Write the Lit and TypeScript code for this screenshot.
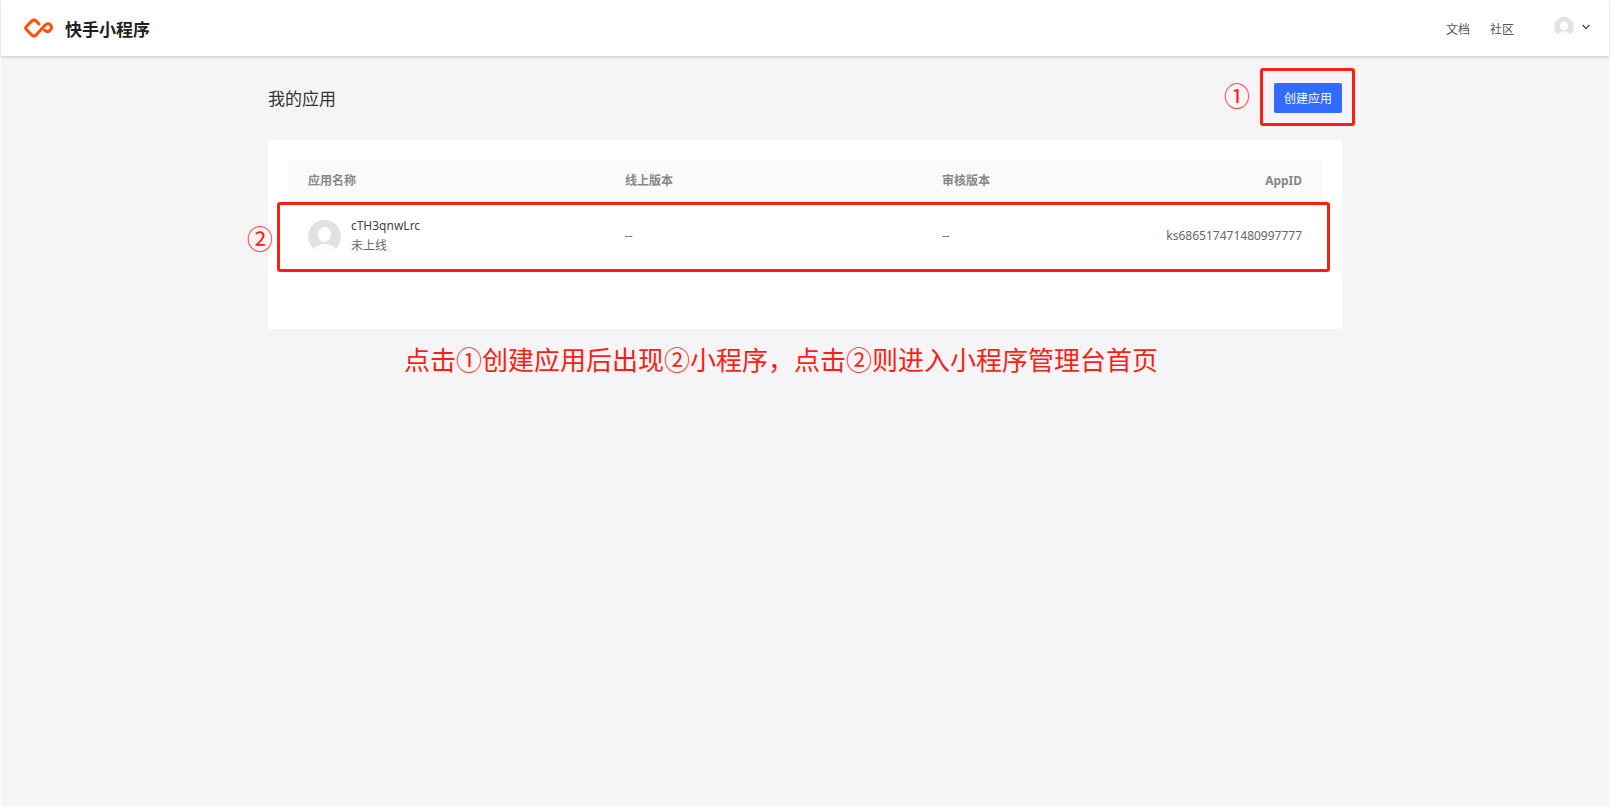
import { LitElement, html, css } from "lit";
import { customElement, property } from "lit/decorators.js";

interface MiniApp {
  name: string;
  status: string;
  online: string;
  review: string;
  appId: string;
}

@customElement("user-avatar")
class UserAvatar extends LitElement {
  static styles = css`
    :host { display: block; flex: none; }
    svg { display: block; width: 100%; height: 100%; }
  `;
  render() {
    return html`<svg viewBox="0 0 33 33" aria-hidden="true">
      <clipPath id="round"><circle cx="16.5" cy="16.5" r="16.5" /></clipPath>
      <g clip-path="url(#round)">
        <rect width="33" height="33" fill="#e2e2e2" />
        <ellipse cx="16.5" cy="14.5" rx="6.5" ry="7.5" fill="#fff" />
        <path d="M2.5 33C5 26.500 11 24 16.500 24S28 26.500 30.500 33z" fill="#fcfcfc" />
      </g>
    </svg>`;
  }
}

@customElement("top-bar")
class TopBar extends LitElement {
  static styles = css`
    :host {
      display: flex;
      align-items: center;
      justify-content: space-between;
      box-sizing: border-box;
      height: 56px;
      padding: 0 19px 0 23px;
      background: #fff;
      box-shadow: 0 1px 3px rgba(0, 0, 0, 0.2);
      position: relative;
    }
    .brand { display: flex; align-items: center; gap: 11px; color: #1f2023; text-decoration: none; font-size: 17px; font-weight: 700; line-height: 24px; }
    .brand span { padding-top: 4px; }
    .logo { display: block; width: 30px; height: 20px; }
    .nav { display: flex; align-items: center; gap: 20px; font-size: 12px; line-height: 18px; padding-top: 4px; }
    .nav a { color: #555; text-decoration: none; }
    .right { display: flex; align-items: center; gap: 40px; }
    .account { display: flex; align-items: center; gap: 8px; padding: 0 0 2px; border: 0; background: none; }
    .face { width: 20px; height: 20px; }
    .chevron { display: block; width: 8px; height: 6px; }
  `;
  render() {
    return html`
      <a class="brand" href="#">
        <svg class="logo" viewBox="0 0 30 20" fill="none" stroke="#ff5000" stroke-width="3" stroke-linecap="round" stroke-linejoin="round" aria-hidden="true">
          <path d="M15 6 12 2.900Q10 .9 8 2.900L2.600 8.200Q.8 10 2.600 11.800L8 17.100Q10 19.100 12 17.100L20.800 7.400Q23.600 4.500 26.300 6.700 28.700 9.200 26.500 11.800L25.600 12.700Q23.200 14.600 20.600 12.300" />
        </svg>
        <span>快手小程序</span>
      </a>
      <div class="right">
        <nav class="nav"><a href="#">文档</a><a href="#">社区</a></nav>
        <button class="account" type="button" aria-label="账号">
          <user-avatar class="face"></user-avatar>
          <svg class="chevron" viewBox="0 0 8 6" fill="none" stroke="#555" stroke-width="1.500" aria-hidden="true"><path d="M.5 1 4 4.500 7.500 1" /></svg>
        </button>
      </div>`;
  }
}

@customElement("app-table")
class AppTable extends LitElement {
  @property({ attribute: false }) apps: MiniApp[] = [];
  static styles = css`
    :host { display: block; position: relative; }
    table { width: 100%; border-collapse: collapse; font-size: 12px; line-height: 20px; }
    th, td { box-sizing: border-box; }
    th { height: 40px; padding: 2px 0 0 20px; background: #fafafa; color: #888; font-weight: 700; text-align: left; }
    td { height: 72px; padding: 0 0 0 20px; color: #666; }
    .version { width: 317px; }
    th:last-child, td:last-child { padding-right: 20px; text-align: right; }
    .app { display: flex; align-items: center; gap: 10px; color: #444; text-decoration: none; }
    .face { width: 33px; height: 33px; }
    .name, .status { display: block; }
    .status { color: #666; }
    .frame { position: absolute; inset: 42px -8px auto -11px; box-sizing: border-box; height: 70px; border: 3px solid #ff1e12; border-radius: 3px; pointer-events: none; }
    .mark { position: absolute; top: 59px; left: -41px; color: #ff1e12; font-size: 26px; line-height: 40px; }
  `;
  render() {
    return html`
      <table>
        <thead>
          <tr><th class="version">应用名称</th><th class="version">线上版本</th><th>审核版本</th><th>AppID</th></tr>
        </thead>
        <tbody>
          ${this.apps.map((a) => html`<tr>
            <td><a class="app" href="#"><user-avatar class="face"></user-avatar>
              <span><span class="name">${a.name}</span><span class="status">${a.status}</span></span></a></td>
            <td>${a.online}</td><td>${a.review}</td><td>${a.appId}</td>
          </tr>`)}
        </tbody>
      </table>
      <div class="frame"></div>
      <span class="mark">②</span>`;
  }
}

@customElement("app-root")
class AppRoot extends LitElement {
  static styles = css`
    :host {
      display: block;
      box-sizing: border-box;
      min-height: 100vh;
      border: solid #fdfdfe;
      border-width: 0 1px 2px 1px;
      background: #f5f5f8;
      font-family: "Noto Sans", "Noto Sans CJK SC", sans-serif;
    }
    .page { width: 66.8%; margin: 0 auto; }
    .heading { display: flex; align-items: center; justify-content: space-between; height: 84px; }
    h1 { margin: 0; padding-top: 2px; color: #333; font-size: 17px; font-weight: 400; line-height: 24px; }
    .create { position: relative; }
    .create button { display: block; height: 30px; padding: 2px 10px 0; border: 0; border-radius: 2px; background: #316bff; color: #fff; font: inherit; font-size: 12px; line-height: 28px; }
    .frame { position: absolute; inset: -15px -13px -13px -14px; border: 3px solid #ff1e12; border-radius: 3px; pointer-events: none; }
    .mark { position: absolute; top: -7px; left: -50px; color: #ff1e12; font-size: 26px; line-height: 40px; }
    .card { padding: 20px 20px 57px; background: #fff; }
    .note { margin: 11px 48px 0 0; color: #ff1e12; font-size: 26px; line-height: 40px; text-align: center; }
  `;
  private apps: MiniApp[] = [
    { name: "cTH3qnwLrc", status: "未上线", online: "--", review: "--", appId: "ks686517471480997777" },
  ];
  render() {
    return html`
      <top-bar></top-bar>
      <main class="page">
        <div class="heading">
          <h1>我的应用</h1>
          <div class="create">
            <button type="button">创建应用</button>
            <div class="frame"></div>
            <span class="mark">①</span>
          </div>
        </div>
        <section class="card"><app-table .apps=${this.apps}></app-table></section>
        <p class="note">点击①创建应用后出现②小程序，点击②则进入小程序管理台首页</p>
      </main>`;
  }
}
